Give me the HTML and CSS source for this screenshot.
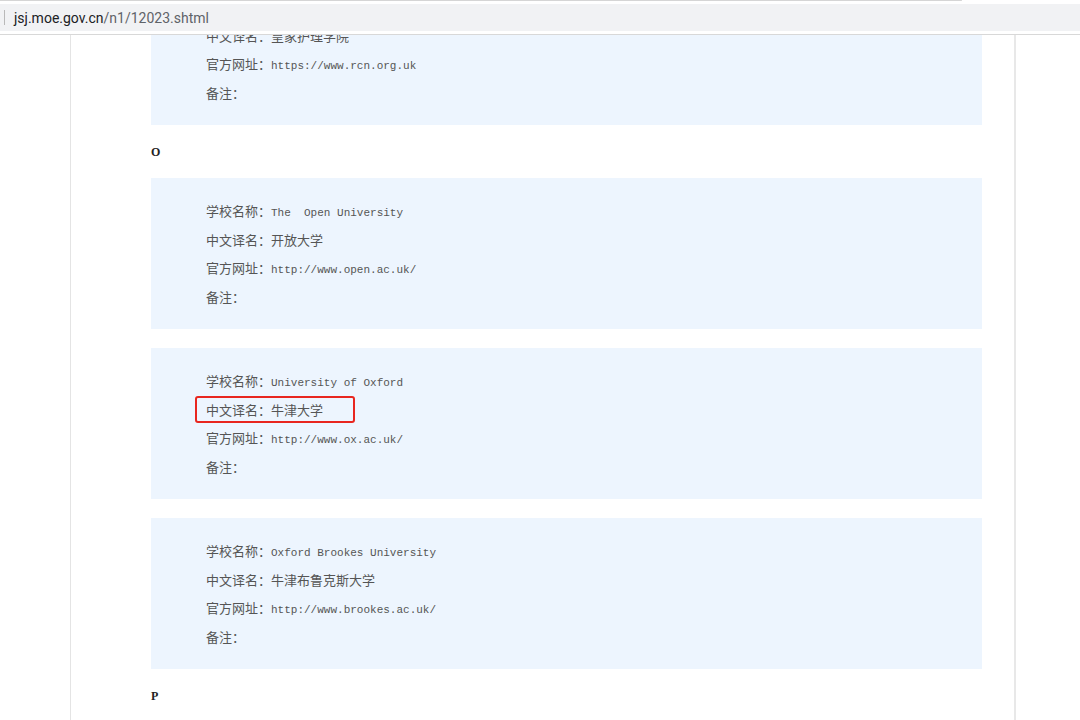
FILE: index.html
```
<!DOCTYPE html>
<html>
<head>
  <meta charset="utf-8">
  <title>jsj.moe.gov.cn/n1/12023.shtml</title>
  <link rel="stylesheet" href="styles.css">
</head>
<body>
  <div class="top-strip"></div>
  <div class="address-bar">
    <span class="caret"></span>
    <span class="host">jsj.moe.gov.cn</span><span class="path">/n1/12023.shtml</span>
  </div>

  <div class="viewport">
    <div class="page">
      <div class="list">
        <div class="card">
          <p class="row">学校名称：<span class="en">Royal College of Nursing</span></p>
          <p class="row">中文译名：皇家护理学院</p>
          <p class="row">官方网址：<span class="en">https://www.rcn.org.uk</span></p>
          <p class="row">备注：</p>
        </div>

        <h3 class="letter">O</h3>

        <div class="card">
          <p class="row">学校名称：<span class="en">The&nbsp; Open University</span></p>
          <p class="row">中文译名：开放大学</p>
          <p class="row">官方网址：<span class="en">http://www.open.ac.uk/</span></p>
          <p class="row">备注：</p>
        </div>

        <div class="card">
          <p class="row">学校名称：<span class="en">University of Oxford</span></p>
          <p class="row marked">中文译名：牛津大学</p>
          <p class="row">官方网址：<span class="en">http://www.ox.ac.uk/</span></p>
          <p class="row">备注：</p>
        </div>

        <div class="card">
          <p class="row">学校名称：<span class="en">Oxford Brookes University</span></p>
          <p class="row">中文译名：牛津布鲁克斯大学</p>
          <p class="row">官方网址：<span class="en">http://www.brookes.ac.uk/</span></p>
          <p class="row">备注：</p>
        </div>

        <h3 class="letter">P</h3>
      </div>
    </div>
  </div>
</body>
</html>
```

FILE: styles.css
```
body {
  margin: 0;
  background: #fff;
  font-family: "Noto Sans CJK SC", sans-serif;
  overflow: hidden;
}
.top-strip {
  width: 962px;
  height: 1px;
  background: #d5d5d5;
  border-radius: 0 1px 1px 0;
  margin-bottom: 3px;
}
.address-bar {
  height: 27px;
  background: #f1f2f4;
  display: flex;
  align-items: center;
  font-family: Roboto, "Noto Sans", sans-serif;
  font-size: 14px;
  border-bottom: 3px solid #fff;
  box-shadow: 0 1px 0 #d8d8d8;
}
.caret {
  width: 1px;
  height: 15px;
  background: #b9b9b9;
  margin: 0 9px 0 4px;
}
.host {
  color: #202124;
}
.path {
  color: #5f6368;
}
.viewport {
  height: 685px;
  margin-top: 1px;
  overflow: hidden;
}
.page {
  display: flow-root;
  margin: 0 64px 0 70px;
  padding: 0 32px 0 80px;
  border-left: 1px solid #e4e4e4;
  border-right: 2px solid #e8e8e8;
  height: 100%;
}
.list {
  margin-top: -61px;
}
.card {
  background: #edf5fe;
  padding: 19px 55px 18px;
  margin-bottom: 19px;
}
.row {
  margin: 0;
  height: 28.5px;
  font-size: 13px;
  line-height: 28.5px;
  color: #555;
  white-space: pre;
}
.en {
  font-family: "Liberation Mono", monospace;
  font-size: 11px;
  line-height: 1;
}
.marked {
  position: relative;
  width: fit-content;
}
.marked::after {
  content: "";
  position: absolute;
  left: -11px;
  right: -32px;
  top: 0;
  bottom: 1px;
  border: 2px solid #e8261f;
  border-radius: 3px;
}
.letter {
  margin: -2px 0 16px;
  height: 20px;
  line-height: 20px;
  font-family: "Liberation Serif", serif;
  font-size: 12px;
  font-weight: bold;
  color: #222;
}
```
